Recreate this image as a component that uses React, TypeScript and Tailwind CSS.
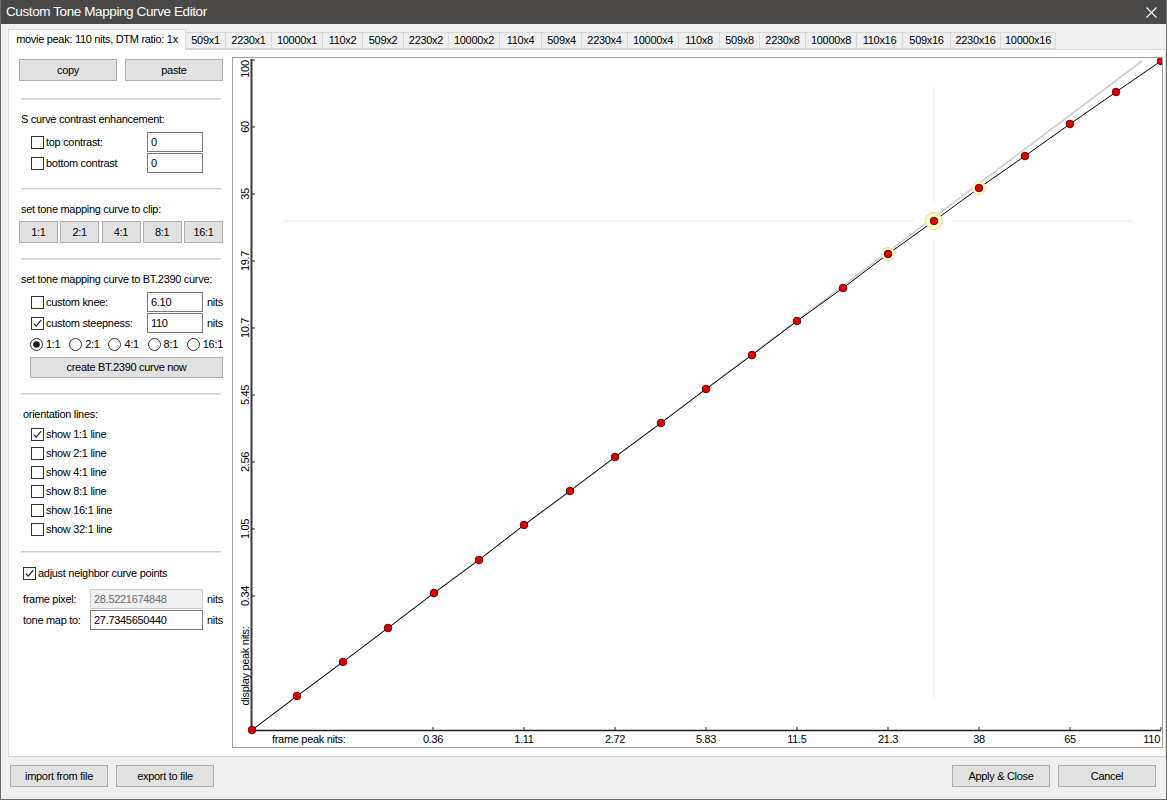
import React from "react";

const tabs: { label: string; w: string }[] = [
  { label: "509x1", w: "w-[40px]" },
  { label: "2230x1", w: "w-[46px]" },
  { label: "10000x1", w: "w-[51px]" },
  { label: "110x2", w: "w-[40px]" },
  { label: "509x2", w: "w-[41px]" },
  { label: "2230x2", w: "w-[45px]" },
  { label: "10000x2", w: "w-[51px]" },
  { label: "110x4", w: "w-[42px]" },
  { label: "509x4", w: "w-[40px]" },
  { label: "2230x4", w: "w-[46px]" },
  { label: "10000x4", w: "w-[51px]" },
  { label: "110x8", w: "w-[41px]" },
  { label: "509x8", w: "w-[40px]" },
  { label: "2230x8", w: "w-[46px]" },
  { label: "10000x8", w: "w-[51px]" },
  { label: "110x16", w: "w-[46px]" },
  { label: "509x16", w: "w-[48px]" },
  { label: "2230x16", w: "w-[50px]" },
  { label: "10000x16", w: "w-[55px]" },
];

function Box({ checked }: { checked?: boolean }) {
  return (
    <svg width="13" height="13" viewBox="0 0 13 13" className="shrink-0">
      <rect x="0.5" y="0.5" width="12" height="12" fill="#fff" stroke="#333" />
      {checked && (
        <path d="M2.8 6.6 L5.2 9.2 L10.2 3.2" fill="none" stroke="#222" strokeWidth="1.2" />
      )}
    </svg>
  );
}

function Radio({ checked }: { checked?: boolean }) {
  return (
    <svg width="13" height="13" viewBox="0 0 13 13" className="shrink-0">
      <circle cx="6.5" cy="6.5" r="6" fill="#fff" stroke="#333" />
      {checked && <circle cx="6.5" cy="6.5" r="3.3" fill="#1a1a1a" />}
    </svg>
  );
}

function Btn({ children, cls }: { children: React.ReactNode; cls: string }) {
  return (
    <div
      className={
        "flex items-center justify-center bg-[#e1e1e1] border border-[#adadad] text-black " + cls
      }
    >
      {children}
    </div>
  );
}

function Sep() {
  return <div className="mx-[2px] h-[2px] bg-[#cfcfcf] border-b border-[#e6e6e6]" />;
}

function Input({ value, cls, disabled }: { value: string; cls: string; disabled?: boolean }) {
  return (
    <div
      className={
        "h-[20px] flex items-center pl-[3px] border " +
        (disabled
          ? "bg-[#f0f0f0] border-[#cccccc] text-[#6d6d6d] "
          : "bg-white border-[#7a7a7a] text-black ") +
        cls
      }
    >
      {value}
    </div>
  );
}

const points: [number, number][] = [
  [252, 730], [297, 696], [343, 662], [388, 628], [434, 593], [479, 560], [524, 525],
  [570, 491], [615, 457], [661, 423], [706, 389], [752, 355], [797, 321], [843, 288],
  [888, 254], [934, 221], [979, 188], [1025, 156], [1070, 124], [1116, 92], [1161, 61],
];

const yTicks: { v: string; y: number; ly: number }[] = [
  { v: "100", y: 60, ly: 69 },
  { v: "60", y: 127, ly: 127 },
  { v: "35", y: 194, ly: 194 },
  { v: "19.7", y: 261, ly: 261 },
  { v: "10.7", y: 328, ly: 328 },
  { v: "5.45", y: 395, ly: 395 },
  { v: "2.56", y: 462, ly: 462 },
  { v: "1.05", y: 529, ly: 529 },
  { v: "0.34", y: 596, ly: 596 },
];

const xTicks: { v: string; x: number; lx: number; anchor: "middle" | "end" }[] = [
  { v: "0.36", x: 433, lx: 433, anchor: "middle" },
  { v: "1.11", x: 524, lx: 524, anchor: "middle" },
  { v: "2.72", x: 615, lx: 615, anchor: "middle" },
  { v: "5.83", x: 706, lx: 706, anchor: "middle" },
  { v: "11.5", x: 797, lx: 797, anchor: "middle" },
  { v: "21.3", x: 888, lx: 888, anchor: "middle" },
  { v: "38", x: 979, lx: 979, anchor: "middle" },
  { v: "65", x: 1070, lx: 1070, anchor: "middle" },
  { v: "110", x: 1161, lx: 1160, anchor: "end" },
];

function Chart() {
  const font = "'Liberation Sans', Arial, sans-serif";
  return (
    <svg width="929" height="689" viewBox="233 58 929 689" className="block">
      {/* crosshair */}
      <line x1="934" y1="87" x2="934" y2="204" stroke="#ebebeb" strokeWidth="1" />
      <line x1="934" y1="240" x2="934" y2="700" stroke="#ebebeb" strokeWidth="1" />
      <line x1="283" y1="221" x2="914" y2="221" stroke="#ebebeb" strokeWidth="1" />
      <line x1="953" y1="221" x2="1133" y2="221" stroke="#ebebeb" strokeWidth="1" />
      {/* 1:1 line */}
      <line x1="252" y1="730" x2="1142" y2="61" stroke="#cdcdcd" strokeWidth="1.6" />
      {/* axes */}
      <line x1="251.5" y1="59" x2="251.5" y2="731" stroke="#3a3a3a" strokeWidth="2" />
      <line x1="251" y1="730.5" x2="1161" y2="730.5" stroke="#1e1e1e" strokeWidth="1.4" />
      {yTicks.map((t) => (
        <line key={"yt" + t.v} x1="252" y1={t.y} x2="255" y2={t.y} stroke="#222" strokeWidth="1" />
      ))}
      {xTicks.map((t) => (
        <line key={"xt" + t.v} x1={t.x} y1="727" x2={t.x} y2="730" stroke="#222" strokeWidth="1" />
      ))}
      {yTicks.map((t) => (
        <text
          key={"yl" + t.v}
          transform={`translate(245 ${t.ly}) rotate(-90)`}
          textAnchor="middle"
          dominantBaseline="central"
          fontFamily={font}
          fontSize="11"
          fill="#000"
        >
          {t.v}
        </text>
      ))}
      <text
        transform="translate(245 666) rotate(-90)"
        textAnchor="middle"
        dominantBaseline="central"
        fontFamily={font}
        fontSize="11"
        fill="#000"
      >
        display peak nits:
      </text>
      {xTicks.map((t) => (
        <text
          key={"xl" + t.v}
          x={t.lx}
          y="739"
          textAnchor={t.anchor}
          dominantBaseline="central"
          fontFamily={font}
          fontSize="11"
          fill="#000"
        >
          {t.v}
        </text>
      ))}
      <text x="272" y="739" dominantBaseline="central" fontFamily={font} fontSize="11" fill="#000">
        frame peak nits:
      </text>
      {/* curve */}
      <polyline
        points={points.map((p) => p.join(",")).join(" ")}
        fill="none"
        stroke="#000"
        strokeWidth="1"
      />
      {/* halos */}
      <circle cx="888" cy="254" r="6.5" fill="#ffffc4" stroke="#e2e2b0" strokeWidth="1" />
      <circle cx="979" cy="188" r="6.5" fill="#ffffc4" stroke="#e2e2b0" strokeWidth="1" />
      <circle cx="934" cy="221" r="8.5" fill="#ffffc4" stroke="#d8d89c" strokeWidth="1" />
      {points.map((p, i) => (
        <circle key={i} cx={p[0]} cy={p[1]} r="3.8" fill="#e00000" stroke="#4a0000" strokeWidth="0.9" />
      ))}
    </svg>
  );
}

export default function App() {
  return (
    <div className="w-[1167px] h-[800px] bg-[#f0f0f0] flex flex-col border-x border-b border-[#6b6b6b] font-['Liberation_Sans',Arial,sans-serif] text-[11px] tracking-[-0.3px] text-black overflow-hidden">
      {/* title bar */}
      <div className="h-[24px] shrink-0 bg-[#4a4948] flex items-center justify-between">
        <div className="pl-[5px] text-white text-[13.5px] tracking-[-0.4px]">Custom Tone Mapping Curve Editor</div>
        <svg width="11" height="11" viewBox="0 0 11 11" className="mr-[9px]">
          <path d="M0.5 0.5 L10.5 10.5 M10.5 0.5 L0.5 10.5" stroke="#fff" strokeWidth="1.1" />
        </svg>
      </div>
      {/* tab strip */}
      <div className="h-[25px] shrink-0 flex items-end pl-[7px]">
        <div className="relative z-10 -mb-px h-[21px] w-[178px] bg-white border border-b-0 border-[#d9d9d9] flex items-center justify-center pb-[1px]">
          movie peak: 110 nits, DTM ratio: 1x
        </div>
        {tabs.map((t) => (
          <div
            key={t.label}
            className={
              "h-[17px] flex items-center justify-center bg-[#f0f0f0] border border-l-0 border-[#d9d9d9] " + t.w
            }
          >
            {t.label}
          </div>
        ))}
      </div>
      {/* panel */}
      <div className="ml-[7px] h-[708px] shrink-0 bg-white border border-[#d9d9d9] flex pl-[10px] pt-[7px]">
        {/* left column */}
        <div className="w-[204px] shrink-0 flex flex-col">
          <div className="mt-[2px] h-[22px] flex gap-[8px]">
            <Btn cls="w-[98px] h-[22px]">copy</Btn>
            <Btn cls="w-[98px] h-[22px]">paste</Btn>
          </div>
          <div className="mt-[17px]"><Sep /></div>

          <div className="mt-[12px] h-[14px] flex items-center pl-[2px]">S curve contrast enhancement:</div>
          <div className="mt-[6px] h-[20px] flex items-center">
            <div className="w-[128px] flex items-center pl-[12px] gap-[2px]">
              <Box /> <span>top contrast:</span>
            </div>
            <Input value="0" cls="w-[56px]" />
          </div>
          <div className="mt-[1px] h-[20px] flex items-center">
            <div className="w-[128px] flex items-center pl-[12px] gap-[2px]">
              <Box /> <span>bottom contrast</span>
            </div>
            <Input value="0" cls="w-[56px]" />
          </div>
          <div className="mt-[15px]"><Sep /></div>

          <div className="mt-[12px] h-[14px] flex items-center pl-[2px]">set tone mapping curve to clip:</div>
          <div className="mt-[5px] h-[22px] flex justify-between">
            <Btn cls="w-[39px] h-[22px]">1:1</Btn>
            <Btn cls="w-[39px] h-[22px]">2:1</Btn>
            <Btn cls="w-[39px] h-[22px]">4:1</Btn>
            <Btn cls="w-[39px] h-[22px]">8:1</Btn>
            <Btn cls="w-[39px] h-[22px]">16:1</Btn>
          </div>
          <div className="mt-[15px]"><Sep /></div>

          <div className="mt-[12px] h-[14px] flex items-center pl-[2px]">set tone mapping curve to BT.2390 curve:</div>
          <div className="mt-[6px] h-[20px] flex items-center">
            <div className="w-[128px] flex items-center pl-[12px] gap-[2px]">
              <Box /> <span>custom knee:</span>
            </div>
            <Input value="6.10" cls="w-[56px]" />
            <span className="ml-[4px]">nits</span>
          </div>
          <div className="mt-[1px] h-[20px] flex items-center">
            <div className="w-[128px] flex items-center pl-[12px] gap-[2px]">
              <Box checked /> <span>custom steepness:</span>
            </div>
            <Input value="110" cls="w-[56px]" />
            <span className="ml-[4px]">nits</span>
          </div>
          <div className="mt-[3px] h-[16px] flex items-center pl-[11px]">
            <div className="w-[39.5px] flex items-center gap-[3px]"><Radio checked /><span>1:1</span></div>
            <div className="w-[39.5px] flex items-center gap-[3px]"><Radio /><span>2:1</span></div>
            <div className="w-[39.5px] flex items-center gap-[3px]"><Radio /><span>4:1</span></div>
            <div className="w-[39.5px] flex items-center gap-[3px]"><Radio /><span>8:1</span></div>
            <div className="flex items-center gap-[3px]"><Radio /><span>16:1</span></div>
          </div>
          <div className="mt-[5px] ml-[11px]">
            <Btn cls="w-[193px] h-[21px]">create BT.2390 curve now</Btn>
          </div>
          <div className="mt-[15px]"><Sep /></div>

          <div className="mt-[12px] h-[14px] flex items-center pl-[4px]">orientation lines:</div>
          <div className="mt-[4px] flex flex-col">
            {["show 1:1 line", "show 2:1 line", "show 4:1 line", "show 8:1 line", "show 16:1 line", "show 32:1 line"].map(
              (l, i) => (
                <div key={l} className="h-[19px] flex items-center pl-[12px] gap-[2px]">
                  <Box checked={i === 0} />
                  <span>{l}</span>
                </div>
              )
            )}
          </div>
          <div className="mt-[12px]"><Sep /></div>

          <div className="mt-[12px] h-[16px] flex items-center pl-[4px] gap-[2px]">
            <Box checked />
            <span>adjust neighbor curve points</span>
          </div>
          <div className="mt-[8px] h-[20px] flex items-center">
            <div className="w-[71px] pl-[4px]">frame pixel:</div>
            <Input value="28.5221674848" cls="w-[113px]" disabled />
            <span className="ml-[4px]">nits</span>
          </div>
          <div className="mt-[1px] h-[20px] flex items-center">
            <div className="w-[71px] pl-[4px]">tone map to:</div>
            <Input value="27.7345650440" cls="w-[113px]" />
            <span className="ml-[4px]">nits</span>
          </div>
        </div>
        {/* chart */}
        <div className="ml-[9px] w-[931px] h-[691px] shrink-0 border border-[#a0a0a0] bg-white">
          <Chart />
        </div>
      </div>
      {/* bottom bar */}
      <div className="flex-1 flex items-start justify-between pt-[8px] pl-[9px] pr-[10px]">
        <div className="flex gap-[8px]">
          <Btn cls="w-[98px] h-[22px]">import from file</Btn>
          <Btn cls="w-[98px] h-[22px]">export to file</Btn>
        </div>
        <div className="flex gap-[8px]">
          <Btn cls="w-[98px] h-[22px]">Apply &amp; Close</Btn>
          <Btn cls="w-[98px] h-[22px]">Cancel</Btn>
        </div>
      </div>
    </div>
  );
}
